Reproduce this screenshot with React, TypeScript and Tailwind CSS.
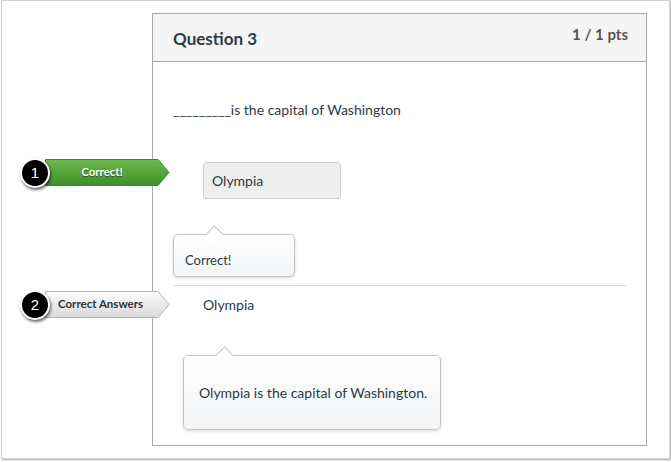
import React from 'react';

function Callout({ n, label, top, green }: { n: number; label: string; top: number; green?: boolean }) {
  const id = green ? 'gGreen' : 'gGray';
  return (
    <div className="absolute left-[18px]" style={{ top }}>
      <div className="relative h-[30px] w-[152px]">
        <svg className="absolute left-[25px] top-[1px]" width="125" height="28" viewBox="0 0 125 28">
          <defs>
            <linearGradient id={id} x1="0" y1="0" x2="0" y2="1">
              {green ? (
                <>
                  <stop offset="0" stopColor="#6dbb4c" />
                  <stop offset="1" stopColor="#3e8e2a" />
                </>
              ) : (
                <>
                  <stop offset="0" stopColor="#fdfdfd" />
                  <stop offset="1" stopColor="#d9d9d9" />
                </>
              )}
            </linearGradient>
          </defs>
          <path
            d="M0.5 0.5 H113 L124 13.5 L113 26.5 H0.5 Z"
            fill={`url(#${id})`}
            stroke={green ? '#3b8a27' : '#b4b4b4'}
            strokeWidth="1"
          />
        </svg>
        <span
          className={
            green
              ? 'absolute left-[26px] top-[0px] flex h-[27px] w-[112px] items-center justify-center text-[11.5px] font-bold text-white [text-shadow:0_1px_1px_rgba(0,0,0,0.5)]'
              : 'absolute left-[38px] top-[0px] flex h-[27px] items-center text-[11.5px] font-bold text-[#333]'
          }
        >
          {label}
        </span>
        <div className="absolute left-0 top-0 flex h-[30px] w-[30px] items-center justify-center rounded-full border-2 border-white bg-black text-[15px] text-white shadow-[1px_2px_3px_rgba(0,0,0,0.6)] [font-family:'Liberation_Sans',sans-serif]">
          {n}
        </div>
      </div>
    </div>
  );
}

function Tip({ children, className, arrowLeft }: { children: React.ReactNode; className: string; arrowLeft: number }) {
  return (
    <div
      className={
        'relative rounded-[5px] border border-[#c3c7cb] bg-gradient-to-b from-white to-[#f2f4f6] shadow-[0_1px_3px_rgba(0,0,0,0.18)] ' +
        className
      }
    >
      <div
        className="absolute top-[-7px] h-[13px] w-[13px] rotate-45 border-l border-t border-[#c3c7cb] bg-white"
        style={{ left: arrowLeft }}
      />
      {children}
    </div>
  );
}

export default function App() {
  return (
    <div className="h-[462px] w-[671px] bg-white [font-family:Lato,'Open_Sans',sans-serif] text-[#2d3b45]">
      <div className="relative ml-[1px] h-[459px] w-[669px] border border-[#d0d0d0] bg-white pl-[150px] pt-[12px] shadow-[1px_1px_2px_rgba(0,0,0,0.35)]">
        <div className="flex h-[433px] w-[495px] flex-col border border-[#a9a9a9]">
          <div className="flex h-[48px] items-start justify-between border-b border-[#a9a9a9] bg-[#f5f5f5] pl-[20px] pr-[18px]">
            <span className="mt-[12px] text-[17px] font-bold text-[#2d3b45]">Question 3</span>
            <span className="mt-[9px] text-[15px] font-bold text-[#555]">1 / 1 pts</span>
          </div>
          <div className="flex flex-col pl-[20px] pr-[19px]">
            <p className="mt-[39px] text-[14px] leading-[18px]">_________is the capital of Washington</p>
            <div className="ml-[30px] mt-[43px] flex h-[37px] w-[138px] items-center rounded-[3px] border border-[#cfcfcf] bg-[#eeeeee] pl-[8px] text-[14px]">
              Olympia
            </div>
            <Tip className="mt-[35px] flex h-[43px] w-[122px] items-end pb-[6px] pl-[11px] text-[13px]" arrowLeft={34}>
              <span className="relative">Correct!</span>
            </Tip>
            <div className="mt-[8px] border-t border-[#dadada]" />
            <p className="ml-[30px] mt-[10px] text-[14px] leading-[18px]">Olympia</p>
            <Tip className="ml-[10px] mt-[41px] flex h-[75px] w-[258px] items-center pb-[1px] pl-[15px] text-[14px]" arrowLeft={34}>
              <span className="relative">Olympia is the capital of Washington.</span>
            </Tip>
          </div>
        </div>
        <Callout n={1} label="Correct!" top={157} green />
        <Callout n={2} label="Correct Answers" top={289} />
      </div>
    </div>
  );
}
